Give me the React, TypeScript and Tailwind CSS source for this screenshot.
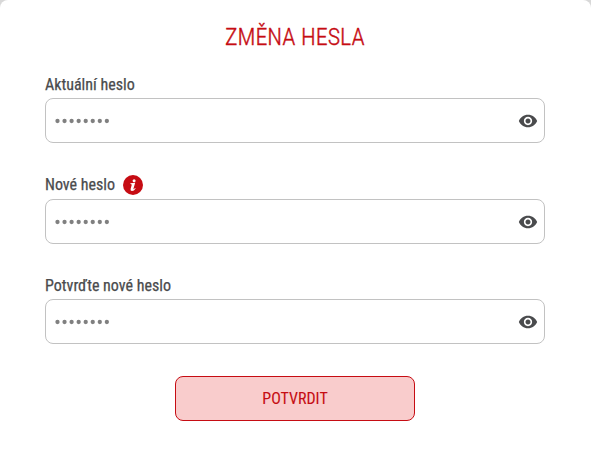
import type { ReactNode } from "react";

function EyeIcon() {
  return (
    <svg viewBox="0 0 24 24" className="mt-[0.700px] mr-[6px] size-5 shrink-0 fill-[#4a4b4d]">
      <path d="M12 4.500C7 4.500 2.730 7.610 1 12c1.730 4.390 6 7.500 11 7.500s9.270-3.110 11-7.500c-1.730-4.390-6-7.500-11-7.500zM12 17c-2.760 0-5-2.240-5-5s2.240-5 5-5 5 2.240 5 5-2.240 5-5 5zm0-8c-1.660 0-3 1.340-3 3s1.340 3 3 3 3-1.340 3-3-1.340-3-3-3z" />
    </svg>
  );
}

function InfoIcon() {
  return (
    <svg viewBox="0 0 20 20" className="size-5">
      <circle cx="10" cy="10" r="10" fill="#c60c13" />
      <circle cx="11.100" cy="5.700" r="1.500" fill="white" />
      <path d="M7.400 8.200L12.200 7.800L10.500 13.600Q10.300 14.500 11 14.100L12.100 13L12.600 13.400Q11 16 9 16Q7.200 16 7.600 14L8.700 10Q8.900 9 7.400 8.900Z" fill="white" />
    </svg>
  );
}

function MaskDots() {
  return (
    <svg viewBox="0 0 56 6" className="mt-[0.700px] h-[6px] w-14 fill-[#808080]">
      {Array.from({ length: 8 }, (_, i) => (
        <circle key={i} cx={2.500 + i * 7.050} cy="3" r="2.150" />
      ))}
    </svg>
  );
}

function PasswordField({ label, hint }: { label: string; hint?: ReactNode }) {
  return (
    <div className="flex flex-col">
      <div className="flex h-6 items-center gap-2 text-base text-[#4a4b4d]">
        <span className="[-webkit-text-stroke:0.250px_#4a4b4d]">{label}</span>
        {hint}
      </div>
      <div className="mt-[1.500px] flex h-[45px] items-center justify-between rounded-lg border border-[#c2c2c2] pl-[9px]">
        <MaskDots />
        <EyeIcon />
      </div>
    </div>
  );
}

export default function App() {
  return (
    <div className="h-[453px] bg-[#d8d8d8] font-['Roboto_Condensed','Roboto',sans-serif] [font-stretch:75%]">
      <div className="flex h-full flex-col rounded-t-[8px] bg-white px-[45px] pt-[21px]">
        <h1 className="h-8 pr-[1.500px] text-center text-[24px] leading-8 font-light text-[#c60c13] [-webkit-text-stroke:0.350px_#c60c13]">ZMĚNA HESLA</h1>
        <div className="mt-[19.750px] flex w-[500px] flex-col gap-[30px]">
          <PasswordField label="Aktuální heslo" />
          <PasswordField label="Nové heslo" hint={<InfoIcon />} />
          <PasswordField label="Potvrďte nové heslo" />
        </div>
        <button className="mt-8 ml-[130px] h-[45px] w-[240px] shrink-0 rounded-lg border border-[#c60c13] bg-[#f9cccc] text-base text-[#c60c13] [-webkit-text-stroke:0.100px_#c60c13]">
          POTVRDIT
        </button>
      </div>
    </div>
  );
}
